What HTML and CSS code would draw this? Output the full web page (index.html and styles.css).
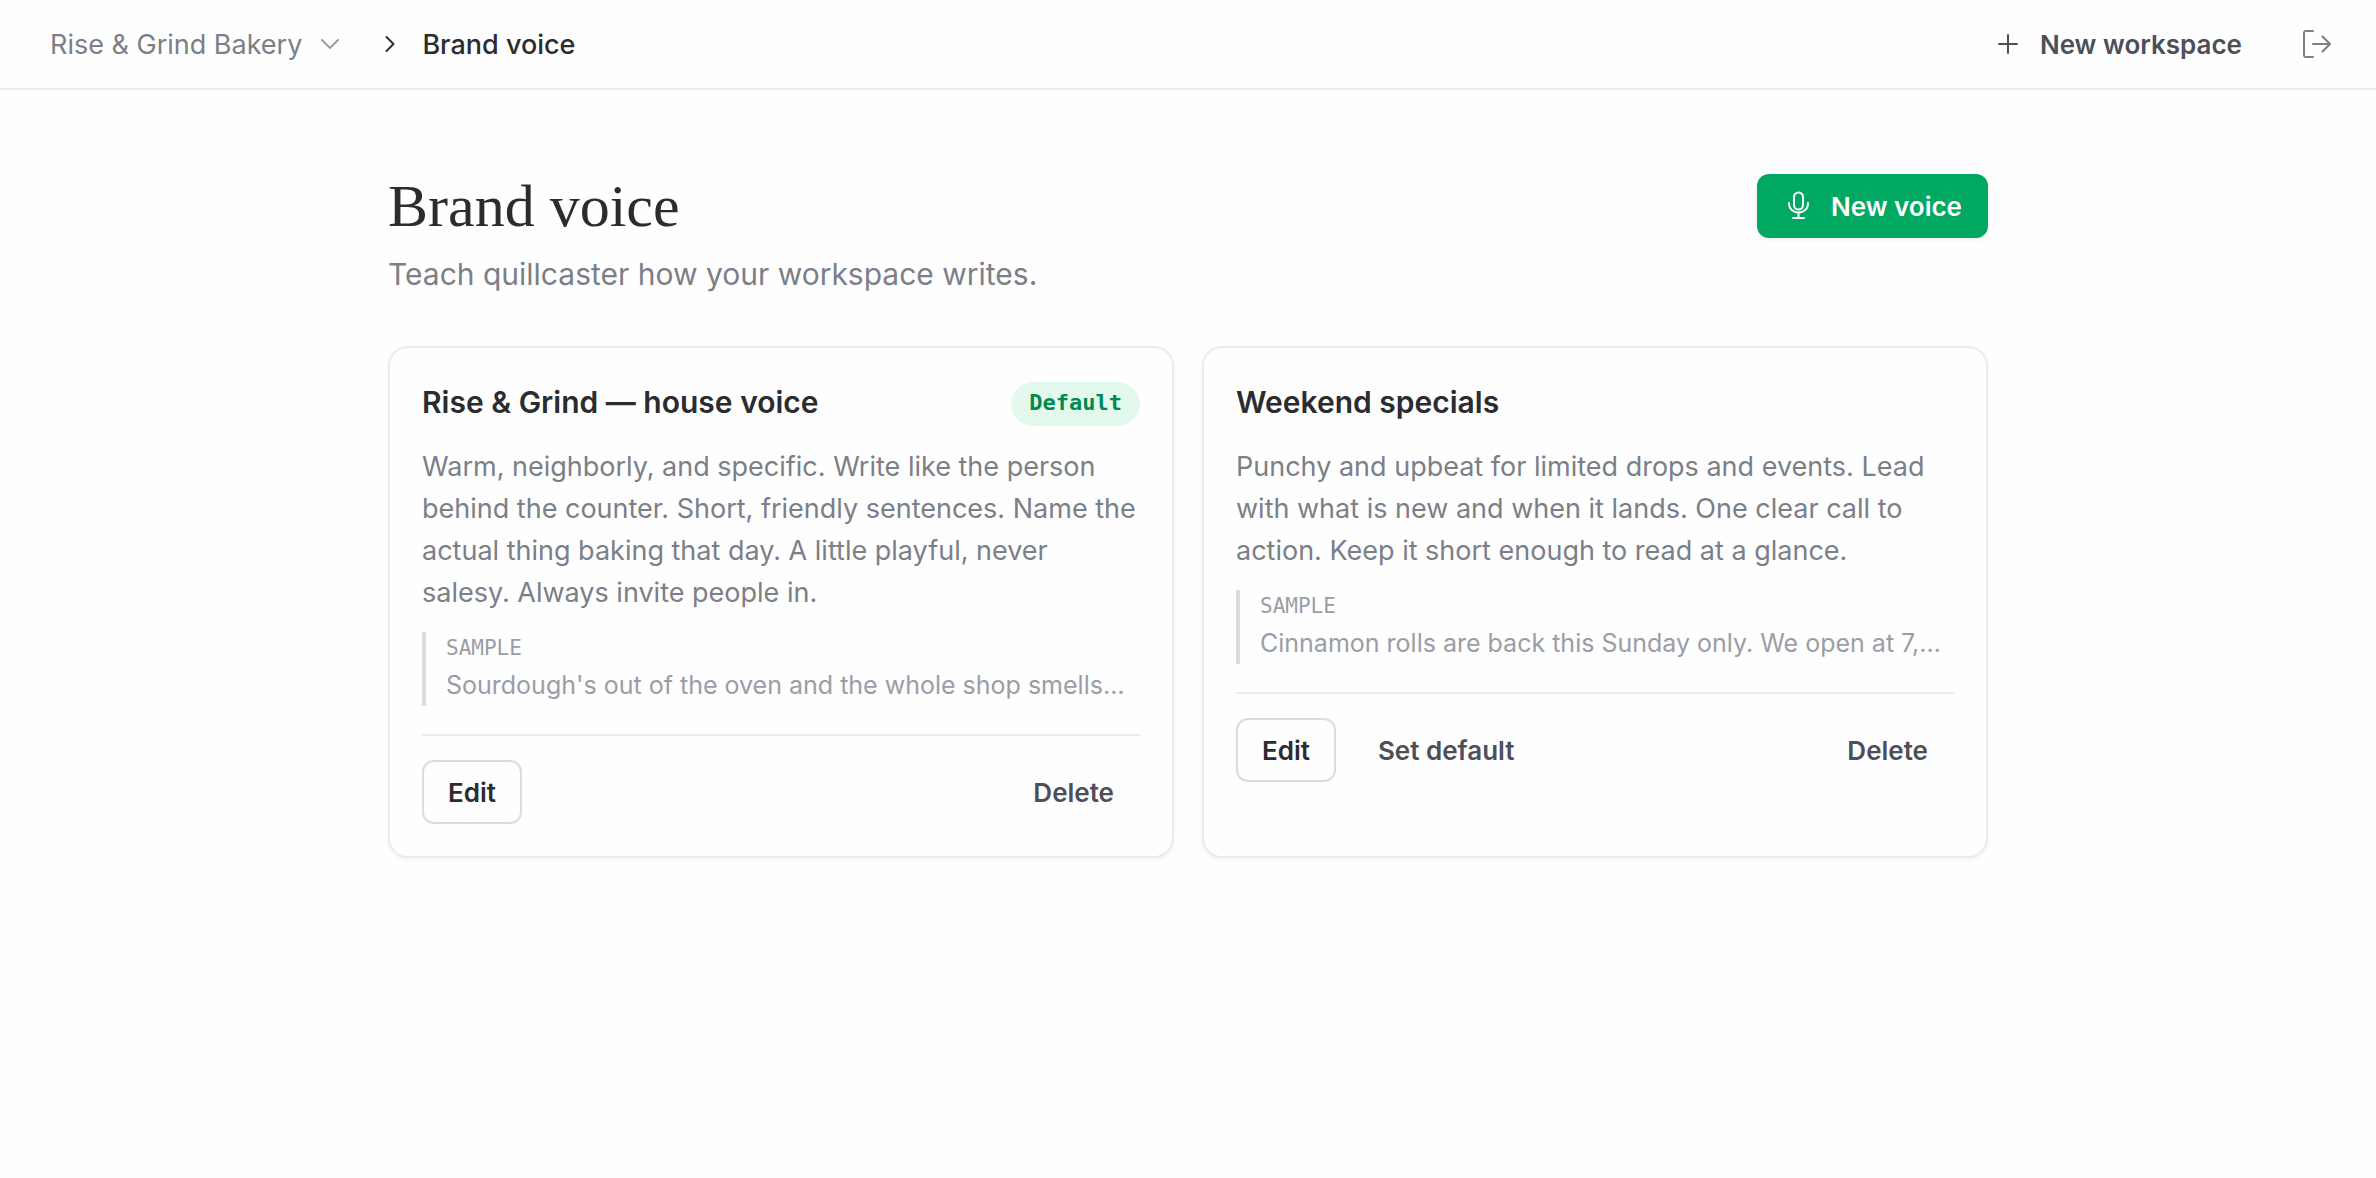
FILE: index.html
```html
<!DOCTYPE html>
<html lang="en">
<head>
<meta charset="utf-8">
<title>Brand voice</title>
<link rel="stylesheet" href="styles.css">
</head>
<body>
<header class="topbar">
  <nav class="crumbs" aria-label="Breadcrumb">
    <button class="switcher" type="button">Rise &amp; Grind Bakery
      <svg class="icon-down" viewBox="0 0 24 24" aria-hidden="true"><path d="M4 8l8 8 8-8"/></svg>
    </button>
    <svg class="icon-right" viewBox="0 0 24 24" aria-hidden="true"><path d="M8.500 5l7 7-7 7"/></svg>
    <span class="current" aria-current="page">Brand voice</span>
  </nav>
  <div class="tools">
    <button class="new-workspace" type="button">
      <svg class="icon-plus" viewBox="0 0 24 24" aria-hidden="true"><path d="M12 3v18M3 12h18"/></svg>
      New workspace
    </button>
    <button class="logout" type="button" aria-label="Log out">
      <svg class="icon-logout" viewBox="0 0 32 32" aria-hidden="true"><path d="M13 29H6a2 2 0 0 1-2-2V5a2 2 0 0 1 2-2h7M13 16h17M22.500 8.500L30 16l-7.500 7.500"/></svg>
    </button>
  </div>
</header>
<main class="page">
  <div class="page-head">
    <div>
      <h1 class="title">Brand voice</h1>
      <p class="subtitle">Teach quillcaster how your workspace writes.</p>
    </div>
    <button class="btn btn-primary" type="button">
      <svg class="icon-mic" viewBox="0 0 24 30" aria-hidden="true"><rect x="7" y="1.500" width="9" height="17" rx="4.500"/><path d="M2 12v1a9.500 8.500 0 0 0 19 0v-1M11.500 21.500v5.500M6 27h11"/></svg>
      New voice
    </button>
  </div>
  <div class="cards">
    <article class="card">
      <div class="card-head">
        <h2 class="card-title">Rise &amp; Grind — house voice</h2>
        <span class="badge">Default</span>
      </div>
      <p class="card-text">Warm, neighborly, and specific. Write like the person behind the counter. Short, friendly sentences. Name the actual thing baking that day. A little playful, never salesy. Always invite people in.</p>
      <div class="sample">
        <div class="sample-label">SAMPLE</div>
        <p class="sample-text">Sourdough's out of the oven and the whole shop smells…</p>
      </div>
      <div class="actions">
        <button class="btn btn-outline" type="button">Edit</button>
        <button class="btn btn-ghost btn-end" type="button">Delete</button>
      </div>
    </article>
    <article class="card">
      <div class="card-head">
        <h2 class="card-title">Weekend specials</h2>
      </div>
      <p class="card-text">Punchy and upbeat for limited drops and events. Lead with what is new and when it lands. One clear call to action. Keep it short enough to read at a glance.</p>
      <div class="sample">
        <div class="sample-label">SAMPLE</div>
        <p class="sample-text">Cinnamon rolls are back this Sunday only. We open at 7,…</p>
      </div>
      <div class="actions">
        <button class="btn btn-outline" type="button">Edit</button>
        <button class="btn btn-ghost" type="button">Set default</button>
        <button class="btn btn-ghost btn-end" type="button">Delete</button>
      </div>
    </article>
  </div>
</main>
</body>
</html>
```
FILE: styles.css
```css
* { box-sizing: border-box; }
body {
  margin: 0;
  background: #fefefe;
  color: #2b2c30;
  font-family: Inter, "Liberation Sans", sans-serif;
  font-size: 27px;
}
h1, h2, p { margin: 0; }
button {
  font: inherit;
  color: inherit;
  background: none;
  border: 0;
  padding: 0;
  cursor: pointer;
}
svg {
  flex: none;
  fill: none;
  stroke: currentColor;
  stroke-width: 2;
  stroke-linecap: round;
  stroke-linejoin: round;
}
.topbar {
  display: flex;
  align-items: center;
  justify-content: space-between;
  height: 90px;
  padding: 0 44px 0 50px;
  border-bottom: 2px solid #ebebec;
}
.crumbs, .tools, .switcher, .new-workspace, .logout { display: flex; align-items: center; }
.switcher { gap: 16px; color: #7b7f88; }
.icon-down { width: 24px; height: 24px; color: #9a9da6; }
.icon-right { width: 24px; height: 24px; margin: 0 20px 0 36px; }
.current { font-weight: 500; }
.tools { gap: 58px; color: #4d4f57; }
.new-workspace { gap: 20px; font-size: 26px; font-weight: 600; }
.icon-plus { width: 24px; height: 24px; }
.logout { color: #7b7f88; }
.icon-logout { width: 32px; height: 32px; }

.page {
  max-width: 1664px;
  margin: 0 auto;
  padding: 72px 32px;
}
.page-head {
  display: flex;
  align-items: flex-start;
  justify-content: space-between;
  margin-bottom: 48px;
}
.title {
  font-family: "Liberation Serif", serif;
  font-weight: 400;
  font-size: 60px;
  line-height: 88px;
}
.subtitle { font-size: 30px; line-height: 48px; color: #7b7f88; }
.btn {
  display: flex;
  align-items: center;
  height: 64px;
  padding: 0 24px;
  border: 2px solid transparent;
  border-radius: 12px;
  font-size: 26px;
  font-weight: 600;
}
.btn-primary {
  gap: 20px;
  margin-top: 12px;
  padding-left: 28px;
  background: #00a862;
  color: #fff;
  box-shadow: 0 2px 4px rgba(0, 0, 0, .06);
}
.icon-mic { width: 24px; height: 30px; }
.cards {
  display: grid;
  grid-template-columns: 1fr 1fr;
  gap: 28px;
}
.card {
  min-width: 0;
  padding: 32px;
  border: 2px solid #ebebec;
  border-radius: 20px;
  box-shadow: 0 2px 4px rgba(0, 0, 0, .05);
}
.card-head {
  display: flex;
  align-items: flex-start;
  justify-content: space-between;
  height: 48px;
  margin-bottom: 18px;
}
.card-title { font-size: 30px; line-height: 44px; font-weight: 600; }
.badge {
  margin-top: 2px;
  padding: 0 18px 2px;
  border-radius: 22px;
  background: #e4f9ee;
  color: #008a50;
  font-family: "DejaVu Sans Mono", monospace;
  font-size: 22px;
  line-height: 42px;
  font-weight: 700;
}
.card-text { line-height: 42px; color: #7b7f88; }
.sample {
  margin: 18px 0 28px;
  padding-left: 20px;
  border-left: 4px solid #dcdcde;
  color: #9a9da6;
}
.sample-label {
  font-family: "DejaVu Sans Mono", monospace;
  font-size: 21px;
  line-height: 32px;
}
.sample-text {
  font-size: 25px;
  line-height: 42px;
  overflow: hidden;
  white-space: nowrap;
  text-overflow: ellipsis;
}
.actions {
  display: flex;
  gap: 16px;
  padding-top: 24px;
  border-top: 2px solid #ebebec;
}
.btn-outline { border-color: #dcdcde; }
.btn-ghost { color: #4d4f57; }
.btn-end { margin-left: auto; }
```
